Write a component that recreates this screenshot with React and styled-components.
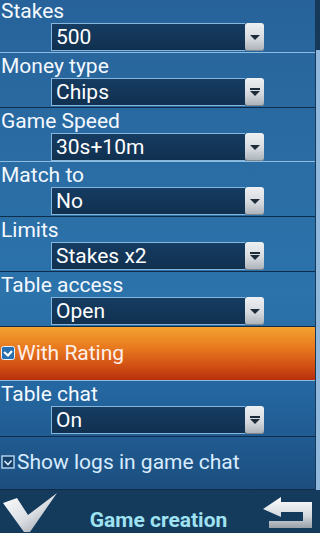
import React from "react";
import styled, { createGlobalStyle } from "styled-components";

const Global = createGlobalStyle`
  html, body { margin: 0; padding: 0; background: #143a5c; }
  body { font-family: Roboto, "Noto Sans", sans-serif; }
  * { box-sizing: border-box; }
`;

const Screen = styled.div`
  width: 320px;
  height: 533px;
  display: flex;
  flex-direction: column;
  overflow: hidden;
  background: #143a5c;
`;

const Body = styled.div`
  height: 490px;
  display: flex;
  overflow: hidden;
`;

const List = styled.div`
  width: 315px;
  display: flex;
  flex-direction: column;
  background: linear-gradient(
    180deg,
    #27639a 0%,
    #2b6ea6 40%,
    #2c73ab 60%,
    #2466a0 80%,
    #1c4e7f 100%
  );
`;

const Track = styled.div`
  width: 5px;
  background: #16395a;
  padding: 50px 0 0 1px;
  display: flex;
`;

const Thumb = styled.div`
  width: 2px;
  flex: 1;
  background: #8fb8dc;
`;

const Row = styled.div`
  flex: none;
  height: ${(p) => p.$h}px;
  margin-top: ${(p) => p.$mt || 0}px;
  border-bottom: 1px solid ${(p) => (p.$sep === "light" ? "#8cbde0" : "#0f2c4a")};
  display: flex;
  flex-direction: column;
  padding-left: 1px;
`;

const Label = styled.div`
  color: #f4f9ff;
  font-size: 21px;
  line-height: 22px;
  margin-top: 2px;
  white-space: nowrap;
`;

const SelectWrap = styled.div`
  display: flex;
  align-items: stretch;
  margin: 1px 0 0 50px;
  height: 28px;
`;

const Field = styled.div`
  width: 194px;
  background: linear-gradient(180deg, #163c62 0%, #10304f 100%);
  border: 1px solid #86b6dc;
  border-right: none;
  color: #ffffff;
  font-size: 21px;
  line-height: 27px;
  padding-left: 4px;
  white-space: nowrap;
`;

const DropBtn = styled.div`
  width: 19px;
  border-radius: 3px;
  background: linear-gradient(180deg, #eef0f2 0%, #d6dadf 55%, #a9b1b8 100%);
  box-shadow: inset 0 -1px 0 #7d8790;
  display: flex;
  flex-direction: column;
  align-items: center;
  justify-content: center;
  gap: 1px;
`;

const Bar = styled.div`
  width: 10px;
  height: 2px;
  background: #1e2c3a;
`;

const Tri = styled.div`
  width: 0;
  height: 0;
  border-left: 5px solid transparent;
  border-right: 5px solid transparent;
  border-top: 5px solid #1e2c3a;
`;

const CheckRow = styled.div`
  flex: none;
  height: ${(p) => p.$h}px;
  border-bottom: 1px solid ${(p) => (p.$sep === "light" ? "#8cbde0" : "#0f2c4a")};
  background: ${(p) =>
    p.$hot
      ? "linear-gradient(180deg, #f4a230 0%, #e8781e 40%, #d04e14 75%, #b8300c 100%)"
      : "transparent"};
  display: flex;
  align-items: center;
  gap: 2px;
  padding: 0 0 2px 1px;
`;

const CheckText = styled.span`
  font-size: 21px;
  line-height: 24px;
  color: ${(p) => (p.$hot ? "#fff0ec" : "#d8ecff")};
  white-space: nowrap;
`;

const BottomBar = styled.div`
  height: 43px;
  background: #143a5c;
  display: flex;
  align-items: center;
  justify-content: space-between;
  padding: 0 7px 0 2px;
`;

const Title = styled.div`
  color: #9fe2f2;
  font-weight: bold;
  font-size: 21px;
  line-height: 24px;
  margin-top: 16px;
  margin-right: 4px;
`;

const IconBox = styled.div`
  width: ${(p) => p.$w}px;
  height: 43px;
  display: flex;
  align-items: center;
`;

function Select({ value, bar }) {
  return (
    <SelectWrap>
      <Field>{value}</Field>
      <DropBtn>
        {bar && <Bar />}
        <Tri />
      </DropBtn>
    </SelectWrap>
  );
}

function CheckIcon({ hot }) {
  return hot ? (
    <svg width="14" height="14" viewBox="0 0 14 14">
      <rect x="0.5" y="0.5" width="13" height="13" rx="2" fill="#2a6fb0" stroke="#e8f2ff" />
      <path d="M3 6 L7 9.5 L11 5" fill="none" stroke="#ffffff" strokeWidth="2.2" />
    </svg>
  ) : (
    <svg width="14" height="14" viewBox="0 0 14 14">
      <rect x="1" y="1" width="12" height="12" fill="#163f68" stroke="#b8d8f4" strokeWidth="1.4" />
      <path d="M3.5 6 L7 9.5 L10.5 5.5" fill="none" stroke="#d8ecff" strokeWidth="1.6" />
    </svg>
  );
}

const rows = [
  { label: "Stakes", value: "500", h: 55, mt: -2, sep: "light" },
  { label: "Money type", value: "Chips", bar: true, h: 55, sep: "dark" },
  { label: "Game Speed", value: "30s+10m", h: 54, sep: "light" },
  { label: "Match to", value: "No", h: 55, sep: "dark" },
  { label: "Limits", value: "Stakes x2", bar: true, h: 55, sep: "dark" },
  { label: "Table access", value: "Open", h: 55, sep: "dark" },
];

export default function App() {
  return (
    <Screen>
      <Global />
      <Body>
        <List>
          {rows.map((r) => (
            <Row key={r.label} $h={r.h} $mt={r.mt} $sep={r.sep}>
              <Label>{r.label}</Label>
              <Select value={r.value} bar={r.bar} />
            </Row>
          ))}
          <CheckRow $h={54} $hot $sep="light">
            <CheckIcon hot />
            <CheckText $hot>With Rating</CheckText>
          </CheckRow>
          <Row $h={56} $sep="dark">
            <Label>Table chat</Label>
            <Select value="On" bar />
          </Row>
          <CheckRow $h={53}>
            <CheckIcon />
            <CheckText>Show logs in game chat</CheckText>
          </CheckRow>
        </List>
        <Track>
          <Thumb />
        </Track>
      </Body>
      <BottomBar>
        <IconBox $w={58}>
          <svg width="58" height="43" viewBox="0 0 58 43">
            <defs>
              <linearGradient id="ck" x1="0" y1="0" x2="1" y2="1">
                <stop offset="0" stopColor="#ffffff" />
                <stop offset="0.55" stopColor="#d9dde2" />
                <stop offset="1" stopColor="#8d949c" />
              </linearGradient>
            </defs>
            <polygon points="1,13 15,8 26,25 55,3 28,42 22,42" fill="url(#ck)" />
          </svg>
        </IconBox>
        <Title>Game creation</Title>
        <IconBox $w={52}>
          <svg width="52" height="43" viewBox="0 0 52 43">
            <defs>
              <linearGradient id="bk" x1="0" y1="0" x2="0" y2="1">
                <stop offset="0" stopColor="#ffffff" />
                <stop offset="0.6" stopColor="#d4d9de" />
                <stop offset="1" stopColor="#98a0a8" />
              </linearGradient>
            </defs>
            <path
              d="M2 19 L20 7 L20 12 L51 12 L51 38 L8 38 L8 31 L42 31 L42 22 L20 22 L20 27 Z"
              fill="url(#bk)"
            />
          </svg>
        </IconBox>
      </BottomBar>
    </Screen>
  );
}
